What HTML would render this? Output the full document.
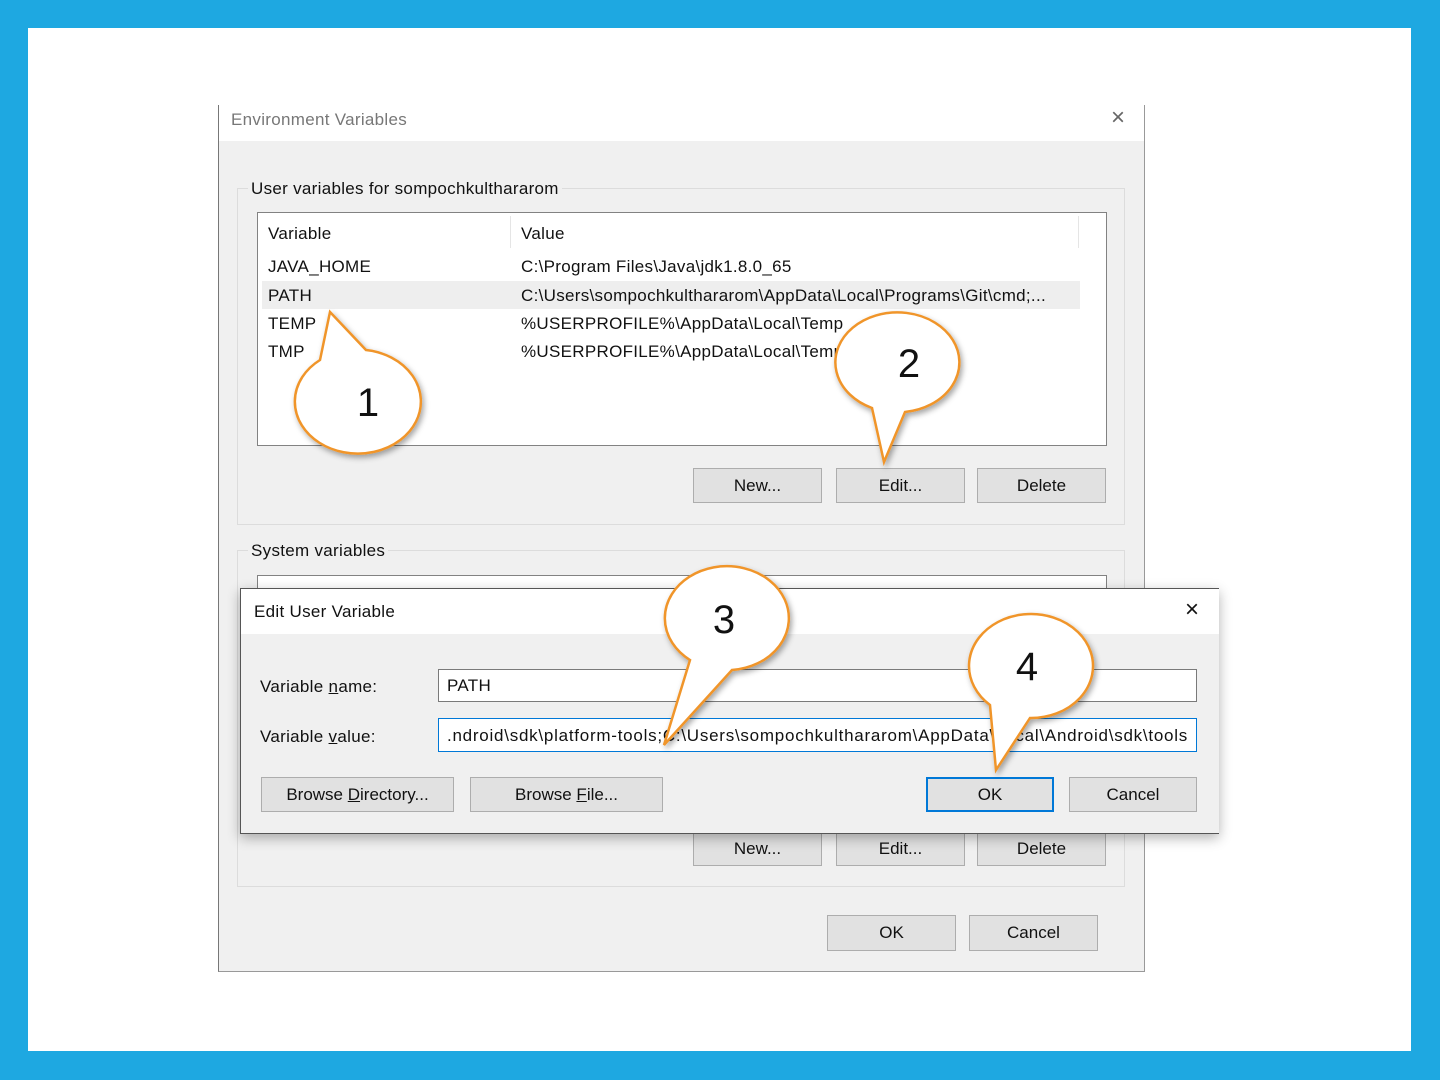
<!DOCTYPE html>
<html><head><meta charset="utf-8"><style>
*{margin:0;padding:0;box-sizing:border-box}
body{width:1440px;height:1080px;background:#1ea8e1;position:relative;overflow:hidden;font-family:"Liberation Sans",sans-serif;font-size:17px;color:#111}
.a{position:absolute}
.btn{position:absolute;background:#e1e1e1;border:1px solid #adadad;text-align:center;line-height:33px;font-size:17px}
.t{position:absolute;white-space:nowrap;font-size:17px;letter-spacing:0.3px}
</style></head><body>
<div class="a" style="left:28px;top:28px;width:1383px;height:1023px;background:#fff"></div>
<!-- Env dialog -->
<div class="a" style="left:218px;top:105px;width:927px;height:867px;background:#f0f0f0;border-left:1px solid #777;border-right:1px solid #999;border-bottom:1px solid #999"></div>
<div class="a" style="left:219px;top:105px;width:925px;height:36px;background:#fff"></div>
<div class="t" style="left:231px;top:110px;color:#777">Environment Variables</div>
<div class="t" style="left:1111px;top:104px;color:#666;font-size:24px">×</div>
<div class="a" style="left:237px;top:188px;width:888px;height:337px;border:1px solid #dcdcdc"></div>
<div class="t" style="left:248px;top:179px;background:#f0f0f0;padding:0 3px">User variables for sompochkulthararom</div>
<div class="a" style="left:257px;top:212px;width:850px;height:234px;background:#fff;border:1px solid #828282"></div>
<div class="a" style="left:510px;top:216px;width:1px;height:32px;background:#e5e5e5"></div>
<div class="a" style="left:1078px;top:216px;width:1px;height:32px;background:#e5e5e5"></div>
<div class="a" style="left:262px;top:281px;width:818px;height:28px;background:#eeeeee"></div>
<div class="t" style="left:268px;top:224px">Variable</div><div class="t" style="left:521px;top:224px">Value</div>
<div class="t" style="left:268px;top:257px">JAVA_HOME</div><div class="t" style="left:521px;top:257px">C:\Program Files\Java\jdk1.8.0_65</div>
<div class="t" style="left:268px;top:286px">PATH</div><div class="t" style="left:521px;top:286px">C:\Users\sompochkulthararom\AppData\Local\Programs\Git\cmd;...</div>
<div class="t" style="left:268px;top:314px">TEMP</div><div class="t" style="left:521px;top:314px">%USERPROFILE%\AppData\Local\Temp</div>
<div class="t" style="left:268px;top:342px">TMP</div><div class="t" style="left:521px;top:342px">%USERPROFILE%\AppData\Local\Temp</div>
<div class="btn" style="left:693px;top:468px;width:129px;height:35px">New...</div>
<div class="btn" style="left:836px;top:468px;width:129px;height:35px">Edit...</div>
<div class="btn" style="left:977px;top:468px;width:129px;height:35px">Delete</div>
<div class="a" style="left:237px;top:550px;width:888px;height:337px;border:1px solid #dcdcdc"></div>
<div class="t" style="left:248px;top:541px;background:#f0f0f0;padding:0 3px">System variables</div>
<div class="a" style="left:257px;top:575px;width:850px;height:40px;background:#fff;border:1px solid #828282"></div>
<div class="btn" style="left:693px;top:831px;width:129px;height:35px">New...</div>
<div class="btn" style="left:836px;top:831px;width:129px;height:35px">Edit...</div>
<div class="btn" style="left:977px;top:831px;width:129px;height:35px">Delete</div>
<div class="btn" style="left:827px;top:915px;width:129px;height:36px">OK</div>
<div class="btn" style="left:969px;top:915px;width:129px;height:36px">Cancel</div>
<!-- Edit dialog -->
<div class="a" style="left:240px;top:588px;width:979px;height:246px;background:#f0f0f0;border:1px solid #555;border-right:none;box-shadow:0 4px 12px rgba(0,0,0,.3)"></div>
<div class="a" style="left:241px;top:589px;width:978px;height:45px;background:#fff"></div>
<div class="t" style="left:254px;top:602px">Edit User Variable</div>
<div class="t" style="left:1185px;top:596px;font-size:24px">×</div>
<div class="t" style="left:260px;top:677px">Variable <u>n</u>ame:</div>
<div class="t" style="left:260px;top:727px">Variable <u>v</u>alue:</div>
<div class="a" style="left:438px;top:669px;width:759px;height:33px;background:#fff;border:1px solid #7a7a7a"></div>
<div class="t" style="left:447px;top:676px">PATH</div>
<div class="a" style="left:438px;top:718px;width:759px;height:34px;background:#fff;border:1px solid #0078d7;overflow:hidden"><div class="t" style="left:8px;top:7px;letter-spacing:0.75px">.ndroid\sdk\platform-tools;C:\Users\sompochkulthararom\AppData\Local\Android\sdk\tools</div></div>
<div class="btn" style="left:261px;top:777px;width:193px;height:35px">Browse <u>D</u>irectory...</div>
<div class="btn" style="left:470px;top:777px;width:193px;height:35px">Browse <u>F</u>ile...</div>
<div class="btn" style="left:926px;top:777px;width:128px;height:35px;border:2px solid #0078d7;line-height:31px">OK</div>
<div class="btn" style="left:1069px;top:777px;width:128px;height:35px">Cancel</div>
<!-- callouts -->
<svg class="a" style="left:0;top:0" width="1440" height="1080">
<defs><filter id="s" x="-20%" y="-20%" width="140%" height="140%"><feDropShadow dx="2" dy="3" stdDeviation="3" flood-opacity="0.35"/></filter></defs>
<g fill="#fff" stroke="#f0952a" stroke-width="2.5" filter="url(#s)">
<path d="M330,312 L366,350 A63,52 0 1 1 320,360 Z"/>
<path d="M884,462 L872,408 A62,50 0 1 1 905,412 Z"/>
<path d="M664,745 L690,660 A62,52 0 1 1 732,670 Z"/>
<path d="M996,770 L990,705 A62,52 0 1 1 1030,718 Z"/>
</g>
<g font-family="Liberation Sans,sans-serif" font-size="40" text-anchor="middle" fill="#111">
<text x="368" y="416">1</text><text x="909" y="377">2</text><text x="724" y="633">3</text><text x="1027" y="680">4</text>
</g>
</svg>
</body></html>
